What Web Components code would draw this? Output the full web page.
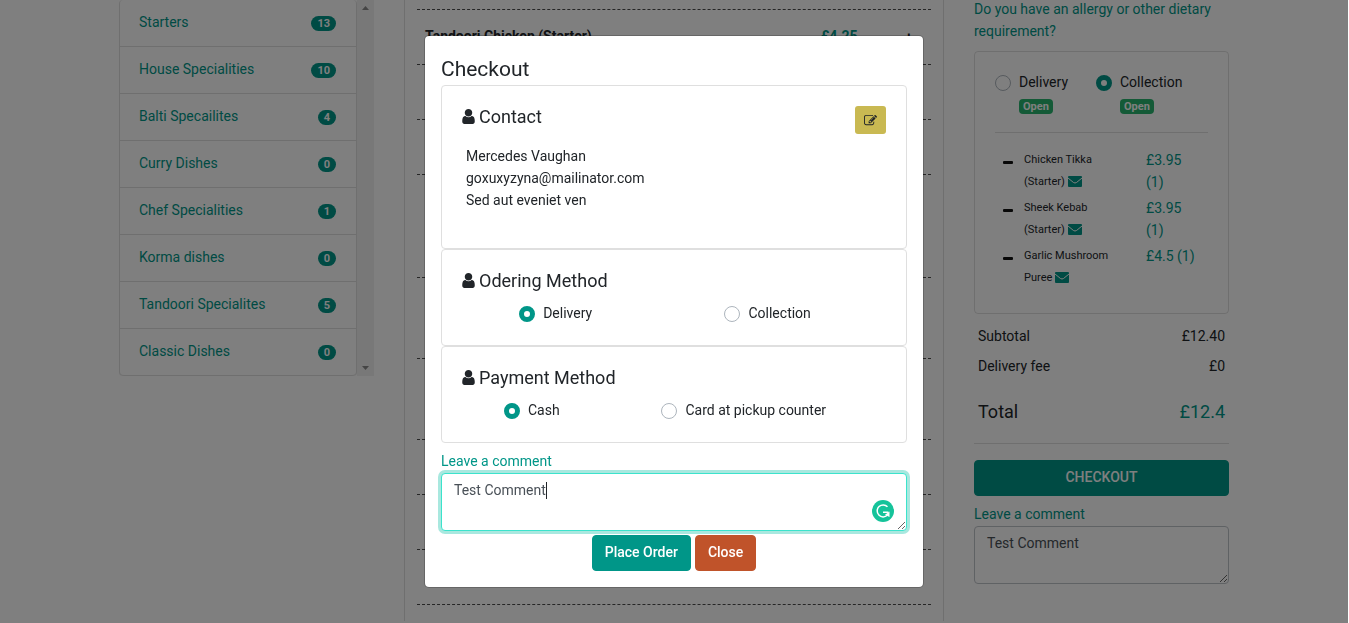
<!DOCTYPE html>
<html lang="en">
<head>
<meta charset="UTF-8">
<meta name="viewport" content="width=device-width, initial-scale=1">
<title>Checkout</title>
<style>
  :root {
    --primary: #009688;
    --text: #212529;
    --line: rgba(0, 0, 0, 0.125);
  }
  html, body {
    height: 100%;
  }
  body {
    margin: 0;
    background-color: white;
    color: var(--text);
    font-family: Roboto, "Liberation Sans", sans-serif;
    font-size: 14px;
    line-height: 22px;
    overflow: hidden;
  }
</style>
</head>
<body>
<order-page>
  <category-list slot="menu">
    <category-item count="13">Starters</category-item>
    <category-item count="10">House Specialities</category-item>
    <category-item count="4">Balti Specailites</category-item>
    <category-item count="0">Curry Dishes</category-item>
    <category-item count="1">Chef Specialities</category-item>
    <category-item count="0">Korma dishes</category-item>
    <category-item count="5">Tandoori Specialites</category-item>
    <category-item count="0">Classic Dishes</category-item>
  </category-list>
  <dish-list slot="dishes"></dish-list>
  <order-basket slot="basket">
    <basket-item price="£3.95 (1)">Chicken Tikka (Starter)</basket-item>
    <basket-item price="£3.95 (1)">Sheek Kebab (Starter)</basket-item>
    <basket-item price="£4.5 (1)">Garlic Mushroom Puree</basket-item>
  </order-basket>
</order-page>
<checkout-modal>
  <modal-card heading="Contact">
    <edit-button slot="action"></edit-button>
    <contact-details>
      <div>Mercedes Vaughan</div>
      <div>goxuxyzyna@mailinator.com</div>
      <div>Sed aut eveniet ven</div>
    </contact-details>
  </modal-card>
  <modal-card heading="Odering Method">
    <radio-group name="method" options="Delivery,Collection"></radio-group>
  </modal-card>
  <modal-card heading="Payment Method">
    <radio-group name="payment" options="Cash,Card at pickup counter"></radio-group>
  </modal-card>
  <comment-box slot="comment" active></comment-box>
</checkout-modal>

<script>
const radioStyles = `
  label {
    display: inline-flex;
    align-items: flex-start;
    gap: 8px;
    min-height: 22px;
    line-height: 20px;
  }
  input {
    appearance: none;
    box-sizing: border-box;
    flex: none;
    width: 16px;
    height: 16px;
    margin: 3px 0 0;
    border: 1px solid #adb5bd;
    border-radius: 50%;
    background-color: white;
  }
  input:checked {
    border: 5px solid var(--primary);
  }
`;

const buttonStyles = `
  button {
    box-sizing: border-box;
    height: 36px;
    padding: 0 12px 2px;
    border: 1px solid var(--primary);
    border-radius: 4px;
    background-color: var(--primary);
    color: white;
    font: 500 14px/22px Roboto, "Liberation Sans", sans-serif;
  }
`;

class OrderPage extends HTMLElement {
  connectedCallback() {
    this.attachShadow({ mode: 'open' });
    this.shadowRoot.innerHTML = `
      <style>
        :host {
          display: block;
          height: 100%;
          overflow: hidden;
        }
        /* the page sits slightly scrolled under the dialog */
        main {
          display: grid;
          grid-template-columns: 5fr 9fr 5fr;
          max-width: 1140px;
          min-height: 100%;
          margin: -2px auto 0;
          padding-right: 1px;
        }
        .menu {
          padding: 2px 30px 0 15px;
        }
        .dishes {
          border-left: 1px solid var(--line);
          border-right: 1px solid var(--line);
          padding: 2px 12px 0;
        }
        .basket {
          padding: 0 15px 0 30px;
        }
      </style>
      <main>
        <div class="menu"><slot name="menu"></slot></div>
        <div class="dishes"><slot name="dishes"></slot></div>
        <div class="basket"><slot name="basket"></slot></div>
      </main>
    `;
  }
}
customElements.define('order-page', OrderPage);

class CategoryList extends HTMLElement {
  connectedCallback() {
    this.attachShadow({ mode: 'open' });
    this.shadowRoot.innerHTML = `
      <style>
        :host {
          display: flex;
        }
        nav {
          flex: 1;
          border: solid var(--line);
          border-width: 0 1px;
          border-radius: 4px;
        }
        .scrollbar {
          display: flex;
          flex-direction: column;
          justify-content: space-between;
          align-items: center;
          width: 17px;
          box-sizing: border-box;
          padding: 5px 0;
          background-color: #f1f1f1;
        }
      </style>
      <nav><slot></slot></nav>
      <div class="scrollbar">
        <svg width="7" height="6" fill="#8a8a8a"><path d="M0 5L3.500 1L7 5z"/></svg>
        <svg width="7" height="6" fill="#8a8a8a"><path d="M0 1L3.500 5L7 1z"/></svg>
      </div>
    `;
  }
}
customElements.define('category-list', CategoryList);

class CategoryItem extends HTMLElement {
  connectedCallback() {
    this.attachShadow({ mode: 'open' });
    this.shadowRoot.innerHTML = `
      <style>
        :host {
          display: block;
          border-bottom: 1px solid var(--line);
        }
        :host(:last-child) {
          border-radius: 0 0 4px 4px;
        }
        a {
          display: flex;
          justify-content: space-between;
          align-items: center;
          padding: 11px 20px 13px 19px;
          color: var(--primary);
          text-decoration: none;
        }
        .badge {
          margin-top: 2px;
          padding: 0 6px;
          border-radius: 8px;
          background-color: var(--primary);
          color: white;
          font-size: 11px;
          font-weight: 700;
          line-height: 15px;
        }
      </style>
      <a href="#menu"><slot></slot><span class="badge">${this.getAttribute('count')}</span></a>
    `;
  }
}
customElements.define('category-item', CategoryItem);

class DishList extends HTMLElement {
  connectedCallback() {
    this.attachShadow({ mode: 'open' });
    this.shadowRoot.innerHTML = `
      <style>
        :host {
          display: block;
        }
        .row {
          box-sizing: border-box;
          height: 55px;
          padding: 15px 8px;
          border-bottom: 1px dashed rgba(0, 0, 0, 0.7);
        }
        .first { height: 10px; padding: 0; }
        .tall { height: 103px; }
        .medium { height: 81px; }
        .dish {
          display: grid;
          grid-template-columns: 396px 1fr 18px;
          font-weight: 700;
        }
        .price { color: var(--primary); }
        button {
          padding: 0;
          border: 0;
          background: none;
          color: var(--text);
          font: 700 14px/22px Roboto, "Liberation Sans", sans-serif;
          text-align: left;
        }
      </style>
      <div class="row first"></div>
      <div class="row dish">
        <span>Tandoori Chicken (Starter)</span>
        <span class="price">£4.25</span>
        <button type="button" aria-label="Add">+</button>
      </div>
      <div class="row"></div>
      <div class="row"></div>
      <div class="row tall"></div>
      <div class="row medium"></div>
      <div class="row medium"></div>
      <div class="row"></div>
      <div class="row"></div>
      <div class="row"></div>
    `;
  }
}
customElements.define('dish-list', DishList);

class OrderBasket extends HTMLElement {
  connectedCallback() {
    this.attachShadow({ mode: 'open' });
    this.shadowRoot.innerHTML = `
      <style>
        :host {
          display: block;
        }
        ${radioStyles}
        ${buttonStyles}
        a {
          display: block;
          color: var(--primary);
          text-decoration: none;
        }
        .card {
          margin-top: 9px;
          padding: 20px;
          border: 1px solid var(--line);
          border-radius: 4px;
        }
        .methods {
          display: grid;
          grid-template-columns: 101px 1fr;
          padding-bottom: 18px;
          border-bottom: 1px solid var(--line);
        }
        .open {
          display: block;
          width: fit-content;
          margin: 2px 0 0 24px;
          padding: 0 4px;
          border-radius: 4px;
          background-color: #28b56e;
          color: white;
          font-size: 11px;
          font-weight: 700;
          line-height: 15px;
        }
        .items {
          display: grid;
          gap: 4px;
          padding: 16px 8px 4px;
        }
        table {
          width: 100%;
          margin-top: 7px;
          border-collapse: collapse;
        }
        th, td {
          padding: 4px;
          font-weight: 400;
          text-align: left;
        }
        td { text-align: right; }
        .total th, .total td {
          padding: 20px 4px;
          font-size: 18px;
        }
        .total td { color: var(--primary); }
        hr {
          margin: 0 0 16px;
          border: 0;
          border-top: 1px solid var(--line);
        }
        button { width: 100%; }
        comment-box { margin-top: 7px; }
      </style>
      <a href="#allergy">Do you have an allergy or other dietary requirement?</a>
      <div class="card">
        <div class="methods">
          <div>
            <label><input type="radio" name="type">Delivery</label>
            <span class="open">Open</span>
          </div>
          <div>
            <label><input type="radio" name="type" checked>Collection</label>
            <span class="open">Open</span>
          </div>
        </div>
        <div class="items"><slot></slot></div>
      </div>
      <table>
        <tr><th scope="row">Subtotal</th><td>£12.40</td></tr>
        <tr><th scope="row">Delivery fee</th><td>£0</td></tr>
        <tr class="total"><th scope="row">Total</th><td>£12.4</td></tr>
      </table>
      <hr>
      <button type="button">CHECKOUT</button>
      <comment-box></comment-box>
    `;
  }
}

class BasketItem extends HTMLElement {
  connectedCallback() {
    this.attachShadow({ mode: 'open' });
    this.shadowRoot.innerHTML = `
      <style>
        :host {
          display: grid;
          grid-template-columns: 21px 1fr 54px;
        }
        button {
          display: flex;
          align-items: center;
          height: 22px;
          padding: 4px 0 0;
          border: 0;
          background: none;
        }
        .name {
          padding-right: 20px;
          font-size: 11px;
        }
        .name svg { vertical-align: -2px; }
        .price { color: var(--primary); }
      </style>
      <button type="button" aria-label="Remove">
        <svg width="10" height="3"><rect width="10" height="3" rx="1" fill="#111"/></svg>
      </button>
      <div class="name">
        <slot></slot>
        <svg width="14" height="11" viewBox="0 0 14 11">
          <rect width="14" height="11" rx="1" fill="#009688"/>
          <path d="M0 2L5.500 6.500Q7 7.500 8.500 6.500L14 2" fill="none" stroke="#fff"/>
        </svg>
      </div>
      <div class="price">${this.getAttribute('price')}</div>
    `;
  }
}
customElements.define('basket-item', BasketItem);

class CommentBox extends HTMLElement {
  connectedCallback() {
    this.attachShadow({ mode: 'open' });
    const active = this.hasAttribute('active');
    this.shadowRoot.innerHTML = `
      <style>
        :host {
          display: block;
        }
        label {
          display: block;
          color: var(--primary);
        }
        .field {
          display: flex;
          position: relative;
          margin-top: 1px;
        }
        textarea {
          box-sizing: border-box;
          width: 100%;
          height: 58px;
          margin: 0;
          padding: 5px 12px;
          border: 1px solid #bfc4c9;
          border-radius: 4px;
          outline: 0;
          background-color: white;
          color: #495057;
          font: 14px/22px Roboto, "Liberation Sans", sans-serif;
          resize: vertical;
        }
        :host([active]) textarea {
          border-color: #3be3cc;
          box-shadow: 0 0 0 3px #a9e8df;
        }
        .caret {
          position: absolute;
          top: 9px;
          left: 105px;
          width: 1px;
          height: 17px;
          background-color: var(--text);
        }
        .helper {
          position: absolute;
          right: 13px;
          bottom: 9px;
        }
      </style>
      <label for="comment">Leave a comment</label>
      <div class="field">
        <textarea id="comment">Test Comment</textarea>
        ${active ? `
          <span class="caret"></span>
          <svg class="helper" width="22" height="22" viewBox="0 0 22 22">
            <circle cx="11" cy="11" r="11" fill="#15c39a"/>
            <path d="M15.500 6.700A6 6 0 1 0 15.300 15.300M11 12.200H16.500" fill="none" stroke="#fff" stroke-width="1.500"/>
            <path d="M17.500 11.500V17L13 14.800z" fill="#fff"/>
          </svg>` : ''}
      </div>
    `;
  }
}
customElements.define('comment-box', CommentBox);
customElements.define('order-basket', OrderBasket);

class CheckoutModal extends HTMLElement {
  connectedCallback() {
    this.attachShadow({ mode: 'open' });
    this.shadowRoot.innerHTML = `
      <style>
        :host {
          display: flex;
          align-items: center;
          justify-content: center;
          position: fixed;
          inset: 0 1px 0 0;
          background-color: rgba(0, 0, 0, 0.5);
        }
        section {
          box-sizing: border-box;
          width: 100%;
          max-width: 500px;
          padding: 16px;
          border: 1px solid rgba(0, 0, 0, 0.2);
          border-radius: 5px;
          background-color: white;
          background-clip: padding-box;
        }
        h4 {
          margin: 0;
          padding-top: 2px;
          font-size: 21px;
          font-weight: 400;
          line-height: 31px;
        }
        .comment { padding-top: 7px; }
        .actions {
          display: flex;
          justify-content: center;
          gap: 4px;
          padding-top: 4px;
        }
        ${buttonStyles}
        .close {
          border-color: #c0532a;
          background-color: #c0532a;
        }
      </style>
      <section role="dialog" aria-label="Checkout">
        <h4>Checkout</h4>
        <slot></slot>
        <div class="comment"><slot name="comment"></slot></div>
        <div class="actions">
          <button type="button">Place Order</button>
          <button type="button" class="close">Close</button>
        </div>
      </section>
    `;
  }
}
customElements.define('checkout-modal', CheckoutModal);

class ModalCard extends HTMLElement {
  connectedCallback() {
    this.attachShadow({ mode: 'open' });
    this.shadowRoot.innerHTML = `
      <style>
        :host {
          display: block;
          padding: 20px;
          border: 1px solid #dfdfdf;
          border-radius: 4px;
        }
        header {
          display: flex;
          justify-content: space-between;
          align-items: flex-start;
          margin-bottom: 11px;
        }
        h5 {
          display: flex;
          align-items: center;
          gap: 4px;
          margin: 0;
          font-size: 18px;
          font-weight: 400;
          line-height: 22px;
        }
        h5 svg { margin-bottom: 2px; }
      </style>
      <header>
        <h5>
          <svg width="13" height="15" viewBox="256 128 1280 1536" fill="#212529"><path d="M1536 1399q0 109-62.500 187t-150.500 78h-854q-88 0-150.500-78t-62.500-187q0-85 8.500-160.500t31.500-152 58.500-131 94-89 134.500-34.500q131 128 313 128t313-128q76 0 134.500 34.500t94 89 58.500 131 31.500 152 8.500 160.500zm-256-887q0 159-112.500 271.500t-271.500 112.500-271.500-112.500-112.500-271.500 112.500-271.500 271.500-112.500 271.500 112.500 112.500 271.500z"/></svg>
          ${this.getAttribute('heading')}
        </h5>
        <slot name="action"></slot>
      </header>
      <slot></slot>
    `;
  }
}
customElements.define('modal-card', ModalCard);

class EditButton extends HTMLElement {
  connectedCallback() {
    this.attachShadow({ mode: 'open' });
    this.shadowRoot.innerHTML = `
      <style>
        :host {
          display: block;
        }
        button {
          display: flex;
          align-items: center;
          justify-content: center;
          width: 31px;
          height: 28px;
          padding: 0;
          border: 0;
          border-radius: 3px;
          background-color: #c9b952;
        }
      </style>
      <button type="button" aria-label="Edit contact">
        <svg width="13" height="13" viewBox="0 0 1792 1792" fill="#212529"><path d="M888 1184l116-116-152-152-116 116v56h96v96h56zm440-720q-16-16-33 1l-350 350q-17 17-1 33t33-1l350-350q17-17 1-33zm80 594v190q0 119-84.500 203.500t-203.500 84.500h-832q-119 0-203.500-84.500t-84.500-203.500v-832q0-119 84.500-203.500t203.500-84.500h832q63 0 117 25 15 7 18 23 3 17-9 29l-49 49q-14 14-32 8-23-6-45-6h-832q-66 0-113 47t-47 113v832q0 66 47 113t113 47h832q66 0 113-47t47-113v-126q0-13 9-22l64-64q15-15 35-7t20 29zm-96-738l288 288-672 672h-288v-288zm444 132l-92 92-288-288 92-92q28-28 68-28t68 28l152 152q28 28 28 68t-28 68z"/></svg>
      </button>
    `;
  }
}
customElements.define('edit-button', EditButton);

class ContactDetails extends HTMLElement {
  connectedCallback() {
    this.attachShadow({ mode: 'open' });
    this.shadowRoot.innerHTML = `
      <style>
        :host {
          display: block;
          padding: 0 4px 17px;
        }
      </style>
      <slot></slot>
    `;
  }
}
customElements.define('contact-details', ContactDetails);

class RadioGroup extends HTMLElement {
  connectedCallback() {
    this.attachShadow({ mode: 'open' });
    const name = this.getAttribute('name');
    const options = this.getAttribute('options').split(',');
    this.shadowRoot.innerHTML = `
      <style>
        :host {
          display: flex;
          justify-content: space-around;
        }
        ${radioStyles}
        label { margin-right: 18px; }
      </style>
      ${options.map((option, i) => `
        <label><input type="radio" name="${name}" ${i === 0 ? 'checked' : ''}>${option}</label>
      `).join('')}
    `;
  }
}
customElements.define('radio-group', RadioGroup);
</script>
</body>
</html>
